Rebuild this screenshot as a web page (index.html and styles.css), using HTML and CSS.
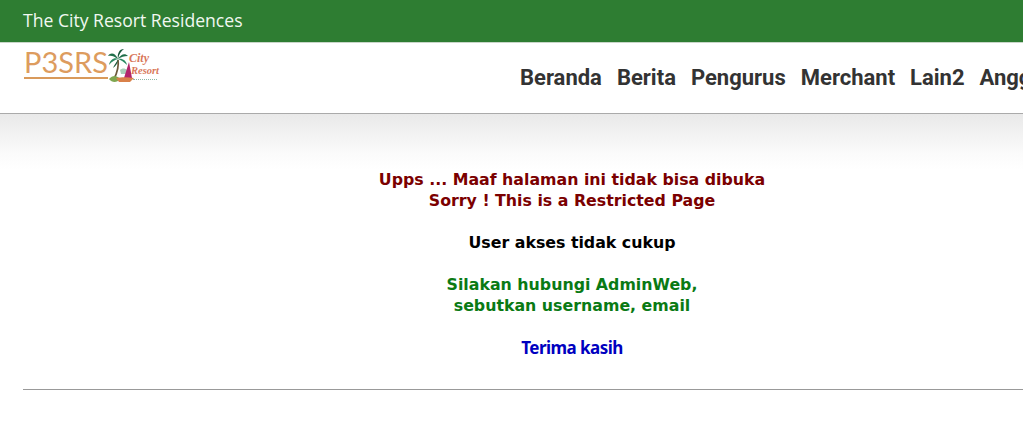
FILE: index.html
```html
<!DOCTYPE html>
<html lang="id">
  <head>
    <meta charset="UTF-8" />
    <meta name="viewport" content="width=device-width, initial-scale=1.0" />
    <title>The City Resort Residences</title>
    <link rel="stylesheet" href="styles.css">
  </head>
  <body>
    <div class="top-bar">The City Resort Residences</div>

    <header class="site-header">
      <a class="logo" href="#">
        <span class="logo-mark">P3SRS</span>
        <svg class="logo-palm" width="26" height="36" viewBox="0 0 26 36" aria-hidden="true">
          <path d="M10 12 C11 19 9 25 6 31" fill="none" stroke="#6d5a3c" stroke-width="1.8" />
          <path d="M10 11 C7 5 3 4 0 8 C3 7 6 8 10 11Z" fill="#1f6f4a" />
          <path d="M10 11 C7 9 2 11 1 17 C4 13 7 12 10 11Z" fill="#2c8a63" />
          <path d="M10 11 C9 6 11 1 16 1 C13 3 11 6 10 11Z" fill="#17573a" />
          <path d="M10 11 C13 6 17 5 20 8 C16 8 13 9 10 11Z" fill="#1f6f4a" />
          <path d="M10 11 C14 10 18 12 19 17 C16 14 13 12 10 11Z" fill="#2c8a63" />
          <path d="M10 11 C9 14 6 17 5 20 C8 18 10 15 10 11Z" fill="#17573a" />
          <path d="M12 22 C14 20 17 20 19 22 L18 26 L13 26Z" fill="#a9cdb8" />
          <path d="M21 14 L24 30 L16 30Z" fill="#b3246b" />
          <path d="M1 31 C5 26 10 28 12 31 C9 35 4 35 1 31Z" fill="#7fa650" />
          <path d="M8 30 C13 29 20 29 26 30 L22 34 L11 34Z" fill="#d9814a" />
        </svg>
        <span class="logo-name">
          <span class="logo-city">City</span>
          <span class="logo-resort">Resort</span>
          <span class="logo-tag"></span>
        </span>
      </a>
      <nav class="main-nav">
        <a href="#">Beranda</a>
        <a href="#">Berita</a>
        <a href="#">Pengurus</a>
        <a href="#">Merchant</a>
        <a href="#">Lain2</a>
        <a href="#">Anggota</a>
      </nav>
    </header>

    <section class="content">
      <div class="message">
        <p class="msg-red">Upps ... Maaf halaman ini tidak bisa dibuka<br />Sorry ! This is a Restricted Page</p>
        <p class="msg-black">User akses tidak cukup</p>
        <p class="msg-green">Silakan hubungi AdminWeb,<br />sebutkan username, email</p>
        <p class="msg-blue">Terima kasih</p>
      </div>
      <hr class="divider" />
    </section>
  </body>
</html>
```

FILE: styles.css
```css
* {
  margin: 0;
  padding: 0;
  box-sizing: border-box;
}

html,
body {
  height: 100%;
  overflow: hidden;
}

body {
  font-family: "Open Sans", sans-serif;
  background-color: #fff;
  color: #333;
}

.top-bar {
  height: 42px;
  padding-left: 23px;
  background-color: #2e7d32;
  color: #f1f8f1;
  font-size: 17.6px;
  line-height: 41px;
}

.site-header {
  display: flex;
  width: 1160px;
  height: 72px;
  padding-left: 24px;
  border-top: 1px solid #c9d6c9;
  border-bottom: 1px solid #aaa;
}

.logo {
  display: flex;
  align-items: flex-start;
  width: 496px;
  height: 38px;
  margin-top: 5px;
  text-decoration: none;
}

.logo-mark {
  width: 84px;
  height: 31px;
  border-bottom: 2px solid #d99a5b;
  color: #dd9c5e;
  font-family: "Lato", sans-serif;
  font-size: 29px;
  font-weight: 400;
  line-height: 28px;
}

.logo-name {
  display: flex;
  flex-direction: column;
  margin: 3px 0 0 -6px;
  color: #d9785a;
  font-family: "Liberation Serif", serif;
  font-size: 10.5px;
  font-style: italic;
  font-weight: 700;
  line-height: 12px;
}

.logo-city {
  margin-left: 1px;
  font-size: 12px;
  line-height: 14px;
}

.logo-resort {
  margin-left: 3px;
}

.logo-tag {
  width: 24px;
  margin: 2px 0 0 5px;
  border-top: 1px dotted #8fb5a5;
}

.main-nav {
  display: flex;
  gap: 15px;
  padding-top: 21px;
}

.main-nav a {
  color: #333;
  font-family: Roboto, sans-serif;
  font-size: 22px;
  font-weight: 700;
  line-height: 28px;
  text-decoration: none;
}

.content {
  width: 1121px;
  height: 323px;
  padding: 55px 0 0 23px;
  background: linear-gradient(#e9e9e9, #fbfbfb 40px, #fff 56px);
}

.message {
  display: flex;
  flex-direction: column;
  gap: 21px;
  font-family: "DejaVu Sans", sans-serif;
  font-size: 15.8px;
  font-weight: 700;
  line-height: 21px;
  text-align: center;
}

.msg-red {
  color: #7b0000;
}

.msg-black {
  color: #000;
}

.msg-green {
  color: #0a7a14;
}

.msg-blue {
  color: #0000c0;
  font-family: "Noto Sans", sans-serif;
  font-size: 17px;
  letter-spacing: -0.55px;
}

.divider {
  margin-top: 31px;
  border: 0;
  border-top: 1px solid #999;
}
```
